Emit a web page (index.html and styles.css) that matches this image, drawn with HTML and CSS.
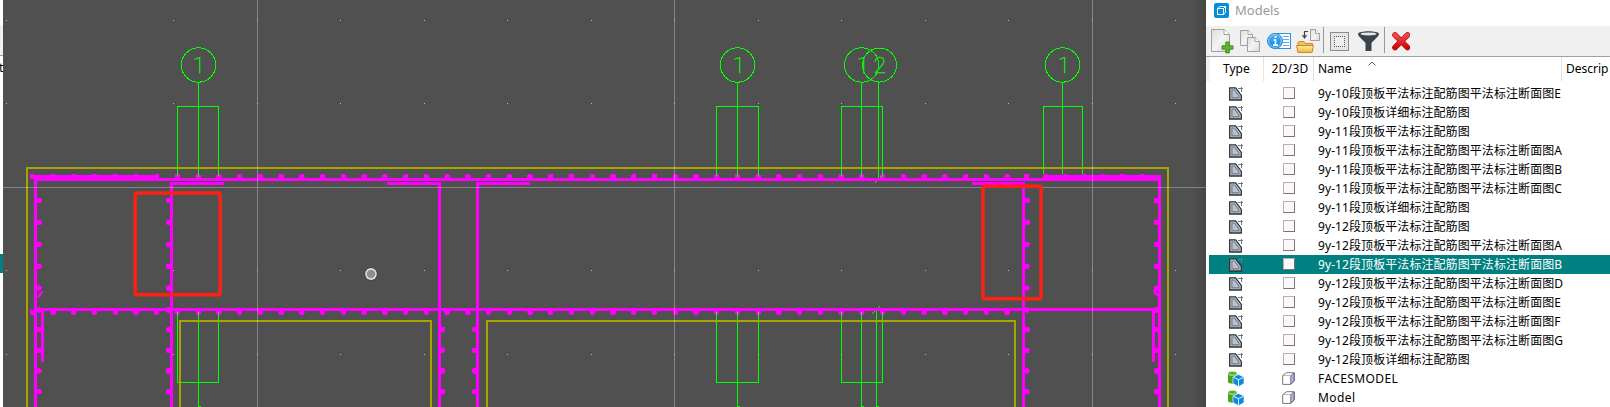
FILE: index.html
```html
<!DOCTYPE html>
<html lang="zh-CN">
<head>
<meta charset="utf-8">
<title>Models</title>
<link rel="stylesheet" href="styles.css">
</head>
<body>
<svg class="defs" width="0" height="0">
  <defs>
    <linearGradient id="paper" x1="0" y1="0" x2="1" y2="1"><stop offset="0" stop-color="#dcdcdc"/><stop offset=".5" stop-color="#f4f4f4"/><stop offset="1" stop-color="#d8d8d8"/></linearGradient>
    <linearGradient id="gold" x1="0" y1="0" x2="0" y2="1"><stop offset="0" stop-color="#ffe9a0"/><stop offset="1" stop-color="#f0b840"/></linearGradient>
    <linearGradient id="blue" x1="0" y1="0" x2="0" y2="1"><stop offset="0" stop-color="#4db4f4"/><stop offset="1" stop-color="#0a84d8"/></linearGradient>
    <linearGradient id="red" x1="0" y1="0" x2="0" y2="1"><stop offset="0" stop-color="#f04a4a"/><stop offset="1" stop-color="#cc0a0a"/></linearGradient>
    <symbol id="sheet" viewBox="0 0 15 14">
      <path d="M.7.8H6.600L12.300 8.400V13H.7Z" fill="#c9cfd6" stroke="#2d3238" stroke-width="1.300"/>
      <path d="M2.900 3H5.500L10 9V10.900H2.900Z" fill="#b9c2cc" stroke="#6c7986" stroke-width="1.100"/>
      <path d="M9 1.500H14M12.500 0V5" fill="none" stroke="#66788a" stroke-width="1"/>
    </symbol>
    <symbol id="solid" viewBox="0 0 16 16">
      <path d="M0 2.500V11C0 13.200 9 13.200 9 11V2.500Z" fill="#4aa51c"/>
      <ellipse cx="4.500" cy="2.300" rx="4.500" ry="2" fill="#55b322" stroke="#dff2d4" stroke-width=".8"/>
      <path d="M10.500 3.500 16 6V12.500L10.500 15.700 5 12.500V6Z" fill="#078be0" stroke="#e8f6ff" stroke-width=".7"/>
      <path d="M5.500 6.300 10.500 8.700 15.500 6.300M10.500 8.700V15.500" fill="none" stroke="#e8f6ff" stroke-width="1"/>
    </symbol>
    <symbol id="cube" viewBox="0 0 13 13">
      <path d="M.7 3.500 4.500.7H12.300V9L8.800 12.400H.7Z" fill="#fff" stroke="#777" stroke-width="1"/>
      <path d="M8.800 3.500 12 1V9L8.800 12Z" fill="#b5b5ea" stroke="#555577" stroke-width=".8"/>
      <path d="M.7 3.500H8.800" stroke="#aaa" stroke-width=".8"/>
    </symbol>
  </defs>
</svg>
<div class="app">
  <div class="edge">
    <div class="edge-bar"></div>
    <div class="edge-head">t</div>
    <div class="edge-selected"></div>
  </div>

  <main class="viewport">
    <svg class="drawing" viewBox="3 0 1203 407" width="1203" height="407" shape-rendering="crispEdges">
      <!-- reinforcement bars -->
      <g class="steel">
        <path class="bar" d="M34 175H159V178H1043V175H1161V407H1158V181H37V407H34Z"/>
        <path class="bar" d="M170 182H224V185H173V407H170ZM387 182H441V407H438V185H387ZM476 182H530V185H479V407H476ZM972 182H1025V407H1022V185H972Z"/>
        <path class="bar" d="M42 308H1155V362H1152V311H44V362H41V308Z"/>
        <path class="dots horizontal" d="M32.300 176.500H1010"/>
        <path class="dots horizontal" d="M32.300 312.300H1010"/>
        <path class="dots end" d="M1026.500 176.500H1150"/>
        <path class="dots upper" d="M39 200.500V312M168.700 200.500V312M1027 200.500V312M1156.500 200.500V312"/>
        <path class="dots lower" d="M39 329.400V407M168.700 329.400V407M442.500 329.400V407M474.700 329.400V407M1027 329.400V407M1156.500 329.400V407"/>
        <path class="tick" d="M38 297.500 42.500 291.500M1153.500 290.500 1158.500 296.500M168 179.500H171"/>
      </g>
      <!-- section markers -->
      <g class="section">
        <path d="M198.500 82V177M177.500 176V106.500H218.500V176M177.500 312V382.500H218.500V312M198.500 312V406.500H201"/>
        <path d="M737.500 82V177M716.500 176V106.500H758.500V176M716.500 312V382.500H758.500V312M737.500 312V406.500H740"/>
        <path d="M861.500 82V177M841.500 176V106.500H882.500V176M841.500 312V382.500H882.500V312M861.500 312V406.500H864M878.500 82V178M876.500 311V406.500H879"/>
        <path d="M1062.500 82V174M1043.500 174V106.500H1082.500V174"/>
        <path d="M875 183 877 181M880 178 882 176M872 314 875 311M878 308 880 306"/>
        <circle cx="198.500" cy="65" r="17.200"/><circle cx="737.500" cy="65" r="17.200"/><circle cx="861.700" cy="65" r="17.200"/><circle cx="879.500" cy="65" r="17"/><circle cx="1062.500" cy="65" r="17.200"/>
      </g>
      <g class="labels">
        <text x="199" y="73">1</text><text x="739" y="73">1</text><text x="863" y="73">1</text><text x="880" y="73">2</text><text x="1064" y="73">1</text>
      </g>
      <!-- concrete outline -->
      <path class="concrete" d="M27 407V168H1168V407M180 407V321H431V407M487 407V321H1015V407"/>
      <!-- reference grid -->
      <path class="grid" d="M257.500 0V407M674.500 0V407M1092.500 0V407M3 187.500H1206"/>
      <g class="points">
        <path d="M6 20.500H1190M6 103.500H1190M6 270.500H1190M6 354.500H1190"/>
      </g>
      <g class="highlight">
        <rect x="135.200" y="193" width="85" height="101.700" rx="2"/>
        <rect x="983" y="186.200" width="58" height="112.600" rx="2"/>
      </g>
      <g class="cursor">
        <circle cx="371" cy="274" r="6.500" fill="#333"/><circle cx="371" cy="274" r="5.900" fill="#e2e2e2"/><circle cx="371" cy="274" r="4.300" fill="#8e8e8e"/>
      </g>
    </svg>
  </main>

  <aside class="panel">
    <header class="title">
      <svg width="15" height="15" viewBox="0 0 15 15"><rect width="15" height="15" rx="2" fill="#078be0"/><path d="M3.500 5.500H9.500V11.500H3.500ZM3.500 5.500 5.700 3.500H11.500V9.500L9.500 11.500M9.500 5.500 11.500 3.500" fill="none" stroke="#fff" stroke-width="1"/></svg>
      <span>Models</span>
    </header>
    <div class="toolbar">
      <svg width="204" height="30" viewBox="1206 26 204 30">
        <path d="M1211.500 29.500H1224L1229.500 34.500V51.500H1211.500Z" fill="url(#paper)" stroke="#a0a0a0"/><path d="M1224 29.500V34.500H1229.500" fill="#fff" stroke="#a0a0a0"/>
        <path d="M1225.800 42H1229.200V45.800H1233V49.200H1229.200V53H1225.800V49.200H1222V45.800H1225.800Z" fill="#5db82c" stroke="#34800f" stroke-width=".8"/>
        <path d="M1240.500 30.500H1248L1252.500 34.500V45.500H1240.500Z" fill="url(#paper)" stroke="#a0a0a0"/><path d="M1248 30.500V34.500H1252.500" fill="#fff" stroke="#a0a0a0"/>
        <path d="M1247.500 37.500H1255L1259.500 41.500V51.500H1247.500Z" fill="url(#paper)" stroke="#a0a0a0"/><path d="M1255 37.500V41.500H1259.500" fill="#fff" stroke="#a0a0a0"/>
        <rect x="1277.500" y="33.500" width="13" height="15" fill="#fff" stroke="#2196e3"/><path d="M1283 36.500H1289M1283 39.500H1289M1283 42.500H1289M1283 45.500H1289" stroke="#58aeea"/>
        <circle cx="1275" cy="41" r="7.500" fill="url(#blue)" stroke="#1c8bdc"/><circle cx="1275" cy="41" r="6.300" fill="none" stroke="#b8e0fa" stroke-width=".8"/>
        <path d="M1275.500 36V38M1273.500 40H1275.500V45M1273 45.200H1278" fill="none" stroke="#fff" stroke-width="1.700"/>
        <path d="M1310.500 29.500H1315.500L1319.500 33.500V40.500H1310.500Z" fill="url(#paper)" stroke="#a0a0a0"/><path d="M1315.500 29.500V33.500H1319.500" fill="#fff" stroke="#a0a0a0"/>
        <path d="M1308 31.500H1304.500V37M1302.500 35 1304.500 38 1306.500 35" fill="none" stroke="#444" stroke-width="1.200"/>
        <path d="M1298 51.500V42.500L1299 41.500H1304L1305.500 43.500H1312.500V51.500Z" fill="#f2c35c" stroke="#c98b22"/>
        <path d="M1296.500 45.500H1313.500L1312 52.500H1298Z" fill="url(#gold)" stroke="#c98b22"/>
        <path d="M1323.500 27V53M1384.500 27V53" stroke="#999"/>
        <rect x="1330.500" y="32.500" width="18" height="18" fill="#e5e5e5" stroke="#8c8c8c"/><rect x="1334" y="36" width="11" height="11" fill="#eee"/><path d="M1334 36.500H1345M1334 46.500H1345M1334.500 36V47M1344.500 36V47" stroke="#555" stroke-dasharray="1 1" fill="none"/>
        <path d="M1358 34C1358 30.400 1379 30.400 1379 34C1379 36 1375 39 1371.500 43V51H1365.500V43C1362 39 1358 36 1358 34Z" fill="#3a444d"/><ellipse cx="1368.500" cy="33.900" rx="8" ry="1.500" fill="#e5e8ea"/>
        <path d="M1395 35 1407.500 47.500M1407.500 35 1395 47.500" stroke="#b80c0c" stroke-width="5.600" stroke-linecap="round"/><path d="M1395 35 1407.500 47.500M1407.500 35 1395 47.500" stroke="url(#red)" stroke-width="4.400" stroke-linecap="round"/>
      </svg>
    </div>
    <div class="columns">
      <span class="type">Type</span><span class="dim">2D/3D</span>
      <span class="name">Name<svg class="sort" width="8" height="5" viewBox="0 0 8 5"><path d="M.5 4.500 4 1 7.500 4.500" fill="none" stroke="#555"/></svg></span>
      <span class="desc">Descrip</span>
    </div>
    <div class="list">
      <div class="row"><svg class="sheet"><use href="#sheet"/></svg><i class="box"></i><span>9y-10段顶板平法标注配筋图平法标注断面图E</span></div>
      <div class="row"><svg class="sheet"><use href="#sheet"/></svg><i class="box"></i><span>9y-10段顶板详细标注配筋图</span></div>
      <div class="row"><svg class="sheet"><use href="#sheet"/></svg><i class="box"></i><span>9y-11段顶板平法标注配筋图</span></div>
      <div class="row"><svg class="sheet"><use href="#sheet"/></svg><i class="box"></i><span>9y-11段顶板平法标注配筋图平法标注断面图A</span></div>
      <div class="row"><svg class="sheet"><use href="#sheet"/></svg><i class="box"></i><span>9y-11段顶板平法标注配筋图平法标注断面图B</span></div>
      <div class="row"><svg class="sheet"><use href="#sheet"/></svg><i class="box"></i><span>9y-11段顶板平法标注配筋图平法标注断面图C</span></div>
      <div class="row"><svg class="sheet"><use href="#sheet"/></svg><i class="box"></i><span>9y-11段顶板详细标注配筋图</span></div>
      <div class="row"><svg class="sheet"><use href="#sheet"/></svg><i class="box"></i><span>9y-12段顶板平法标注配筋图</span></div>
      <div class="row"><svg class="sheet"><use href="#sheet"/></svg><i class="box"></i><span>9y-12段顶板平法标注配筋图平法标注断面图A</span></div>
      <div class="row selected"><svg class="sheet"><use href="#sheet"/></svg><i class="box"></i><span>9y-12段顶板平法标注配筋图平法标注断面图B</span></div>
      <div class="row"><svg class="sheet"><use href="#sheet"/></svg><i class="box"></i><span>9y-12段顶板平法标注配筋图平法标注断面图D</span></div>
      <div class="row"><svg class="sheet"><use href="#sheet"/></svg><i class="box"></i><span>9y-12段顶板平法标注配筋图平法标注断面图E</span></div>
      <div class="row"><svg class="sheet"><use href="#sheet"/></svg><i class="box"></i><span>9y-12段顶板平法标注配筋图平法标注断面图F</span></div>
      <div class="row"><svg class="sheet"><use href="#sheet"/></svg><i class="box"></i><span>9y-12段顶板平法标注配筋图平法标注断面图G</span></div>
      <div class="row"><svg class="sheet"><use href="#sheet"/></svg><i class="box"></i><span>9y-12段顶板详细标注配筋图</span></div>
      <div class="row model"><svg class="solid"><use href="#solid"/></svg><svg class="cube"><use href="#cube"/></svg><span>FACESMODEL</span></div>
      <div class="row model"><svg class="solid"><use href="#solid"/></svg><svg class="cube"><use href="#cube"/></svg><span>Model</span></div>
    </div>
  </aside>
</div>
</body>
</html>
```

FILE: styles.css
```css
* { box-sizing: border-box; }
body { margin: 0; overflow: hidden; background: #fff; font: 12px/19px "Noto Sans", "Noto Sans CJK SC", sans-serif; color: #000; }
svg { display: block; }
.defs { position: absolute; }
.app { display: grid; grid-template-columns: 3px 1203px 404px; height: 407px; overflow: hidden; }

.edge { overflow: hidden; padding-top: 25px; }
.edge-bar { height: 31px; background: #f0f0f0; border-bottom: 1px solid #a0a0a0; }
.edge-head { height: 198px; padding-top: 2px; text-indent: -1px; }
.edge-selected { height: 19px; background: #008080; }

.viewport { background: linear-gradient(to right, #505050 1190px, #464646 1203px); }
.bar { fill: #f0f; }
.dots { fill: none; stroke: #f0f; stroke-width: 5.4; stroke-linecap: round; }
.horizontal { stroke-dasharray: 0 20.74; }
.end { stroke-dasharray: 0 19.2; }
.upper { stroke-dasharray: 0 21.9; }
.lower { stroke-dasharray: 0 20.8; }
.tick { fill: none; stroke: #f0f; stroke-width: 2.4; }
.section { fill: none; stroke: #0f0; stroke-width: 1; }
.labels { fill: #0f0; stroke: #0f0; stroke-width: .3; font: 100 22.5px Roboto, sans-serif; text-anchor: middle; }
.concrete { fill: none; stroke: #a8a400; stroke-width: 2; }
.grid { fill: none; stroke: #fff; stroke-opacity: .3; }
.points { fill: none; stroke: #bbb; stroke-dasharray: 1 82.5; }
.highlight { fill: none; stroke: #ff2012; stroke-width: 3.4; shape-rendering: auto; }
.cursor { shape-rendering: auto; }

.panel { background: #fff; overflow: hidden; }
.title { display: flex; gap: 6px; height: 26px; padding: 3px 0 0 8px; color: #999; font-size: 13px; line-height: 15px; }
.toolbar { height: 31px; background: #f0f0f0; border-bottom: 1px solid #a0a0a0; }
.columns { display: grid; grid-template-columns: 54px 50px 248px 48px; height: 24px; border-left: 4px solid #f0f0f0; line-height: 23px; }
.columns span { border-right: 1px solid #e2e2e2; white-space: nowrap; }
.columns .type { padding-left: 13px; }
.columns .dim { padding-left: 3px; text-align: center; letter-spacing: .3px; }
.columns .name { display: flex; padding-left: 4px; }
.sort { margin: 4px 0 0 16px; }
.columns .desc { padding-left: 4px; border-right: 0; }
.list { margin: 3px 0 0 3px; }
.row { display: grid; grid-template-columns: 73px 36px 1fr; height: 19px; align-items: center; white-space: nowrap; letter-spacing: .08px; }
.row > :first-child { margin-left: 20px; }
.row > :nth-child(2) { justify-self: start; }
.model { letter-spacing: .4px; }
.selected { background: #008080; color: #fff; }
.sheet { width: 15px; height: 14px; }
.row > .solid { width: 16px; height: 16px; margin-left: 19px; }
.cube { width: 13px; height: 13px; }
.box { width: 12px; height: 12px; margin: 0 0 2px 1px; background: #fdf7fb; border: 1px solid #b5b0b5; border-right-color: #777; border-bottom-color: #777; }
```
